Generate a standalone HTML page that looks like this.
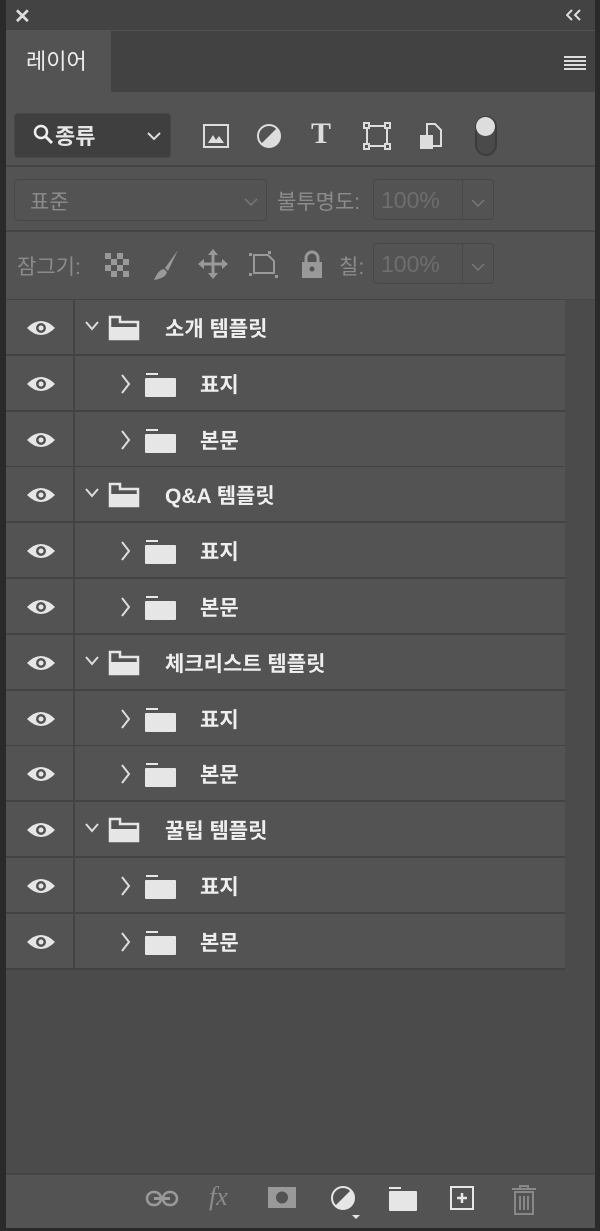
<!DOCTYPE html>
<html><head><meta charset="utf-8"><style>
*{margin:0;padding:0;box-sizing:border-box}
body{width:600px;height:1231px;background:#2a2a2a;position:relative;overflow:hidden;font-family:"Liberation Sans","Noto Sans CJK KR",sans-serif;color:#e6e6e6}
.a{position:absolute}
.panel{left:6px;top:0;width:589px;height:1228px;background:#535353}
.top{left:6px;top:0;width:589px;height:30px;background:#434343}
.tabbar{left:6px;top:31px;width:589px;height:61px;background:#424242}
.tab{left:6px;top:31px;width:105px;height:62px;background:#535353;font-size:22px;padding:13px 0 0 20px;color:#eee}
.sep{left:6px;width:589px;height:2px;background:#444}
.dim{color:#8c8c8c}
.box{border:1px solid #474747;border-radius:4px}
.list{left:6px;top:300px;width:559px;height:670px}
.row{position:absolute;left:0;width:559px;height:56px;background:#535353;border-bottom:2px solid #424242}
.eye{position:absolute;left:20px;top:18px}
.vl{position:absolute;left:67px;top:0;width:2px;height:56px;background:#444}
.t{position:absolute;top:13px;font-size:21px;font-weight:bold;color:#eee}
.below{left:6px;top:970px;width:589px;height:203px;background:#4b4b4b}
.scroll{left:565px;top:300px;width:30px;height:873px;background:#4b4b4b}
.bot{left:6px;top:1173px;width:589px;height:55px;background:#535353;border-top:2px solid #444}
.pct{font-size:23px;color:#6e6e6e}
</style></head><body>
<div class="a panel"></div>
<div class="a top"></div>
<div class="a" style="left:14px;top:4px;font-size:20px;font-weight:bold;color:#ddd">✕</div>
<svg class="a" style="left:566px;top:9px" width="16" height="12"><path d="M6 1 L1 6 L6 11 M14 1 L9 6 L14 11" stroke="#ddd" stroke-width="2" fill="none"/></svg>
<div class="a tabbar"></div>
<div class="a tab">레이어</div>
<svg class="a" style="left:563px;top:55px" width="24" height="15"><g stroke="#ddd" stroke-width="2"><line x1="1" y1="2" x2="23" y2="2"/><line x1="1" y1="6" x2="23" y2="6"/><line x1="1" y1="10" x2="23" y2="10"/><line x1="1" y1="14" x2="23" y2="14"/></g></svg>

<div class="a box" style="left:14px;top:113px;width:157px;height:45px;background:#3f3f3f"></div>
<svg class="a" style="left:33px;top:124px" width="22" height="22"><circle cx="8" cy="8" r="6" stroke="#eee" stroke-width="2.5" fill="none"/><line x1="12" y1="12" x2="19" y2="19" stroke="#eee" stroke-width="3"/></svg>
<div class="a" style="left:55px;top:119px;font-size:22px;font-weight:bold">종류</div>
<svg class="a" style="left:147px;top:131px" width="14" height="10"><path d="M1 2 L7 8 L13 2" stroke="#ddd" stroke-width="2" fill="none"/></svg>
<svg class="a" style="left:202px;top:123px" width="28" height="26"><rect x="2" y="2" width="24" height="22" stroke="#ddd" stroke-width="2" fill="none"/><path d="M6 20 L11 12 L14 17 L17 13 L22 20Z" fill="#ddd"/></svg>
<svg class="a" style="left:256px;top:123px" width="26" height="26"><circle cx="13" cy="13" r="11" stroke="#ddd" stroke-width="2" fill="none"/><path d="M21 5 A11 11 0 0 1 5 21Z" fill="#ddd"/></svg>
<div class="a" style="left:311px;top:117px;font-size:30px;font-weight:bold;font-family:'Liberation Serif',serif;color:#ddd">T</div>
<svg class="a" style="left:363px;top:122px" width="28" height="28"><rect x="4" y="4" width="20" height="20" stroke="#ddd" stroke-width="2" fill="none"/><g fill="#535353" stroke="#ddd" stroke-width="2"><rect x="1" y="1" width="5" height="5"/><rect x="22" y="1" width="5" height="5"/><rect x="1" y="22" width="5" height="5"/><rect x="22" y="22" width="5" height="5"/></g></svg>
<svg class="a" style="left:419px;top:122px" width="24" height="30"><path d="M8 2 H16 L22 8 V24 H8Z" stroke="#ddd" stroke-width="2" fill="none"/><rect x="1" y="13" width="13" height="14" fill="#ddd"/></svg>
<div class="a" style="left:475px;top:116px;width:22px;height:40px;border:2px solid #3c3c3c;border-radius:11px;background:#4a4a4a"></div>
<div class="a" style="left:476px;top:117px;width:19px;height:19px;border-radius:50%;background:#ddd"></div>
<div class="a sep" style="top:165px"></div>

<div class="a box" style="left:14px;top:179px;width:253px;height:42px"></div>
<div class="a dim" style="left:30px;top:186px;font-size:21px">표준</div>
<svg class="a" style="left:244px;top:197px" width="14" height="10"><path d="M1 2 L7 8 L13 2" stroke="#777" stroke-width="1.5" fill="none"/></svg>
<div class="a dim" style="left:277px;top:186px;font-size:21px">불투명도:</div>
<div class="a box" style="left:373px;top:179px;width:121px;height:41px"></div>
<div class="a" style="left:462px;top:180px;width:1px;height:39px;background:#474747"></div>
<div class="a pct" style="left:381px;top:187px">100%</div>
<svg class="a" style="left:471px;top:198px" width="14" height="10"><path d="M1 2 L7 8 L13 2" stroke="#777" stroke-width="1.5" fill="none"/></svg>
<div class="a sep" style="top:230px"></div>

<div class="a dim" style="left:17px;top:251px;font-size:21px">잠그기:</div>
<svg class="a" style="left:104px;top:252px" width="26" height="26"><rect x="1" y="1" width="24" height="24" fill="#999"/><g fill="#535353"><rect x="7" y="1" width="6" height="6"/><rect x="19" y="1" width="6" height="6"/><rect x="1" y="7" width="6" height="6"/><rect x="13" y="7" width="6" height="6"/><rect x="7" y="13" width="6" height="6"/><rect x="19" y="13" width="6" height="6"/><rect x="1" y="19" width="6" height="6"/><rect x="13" y="19" width="6" height="6"/></g></svg>
<svg class="a" style="left:152px;top:248px" width="30" height="34"><path d="M26 2 L13 20 L16 23 Z" fill="#999"/><path d="M12 21 C6 22 4 28 2 32 C8 31 14 29 15 24Z" fill="#999"/></svg>
<svg class="a" style="left:198px;top:249px" width="30" height="30"><g stroke="#999" stroke-width="3"><line x1="15" y1="3" x2="15" y2="27"/><line x1="3" y1="15" x2="27" y2="15"/></g><g fill="#999"><path d="M15 0 L20 6 H10Z"/><path d="M15 30 L20 24 H10Z"/><path d="M0 15 L6 10 V20Z"/><path d="M30 15 L24 10 V20Z"/></g></svg>
<svg class="a" style="left:248px;top:250px" width="32" height="28"><g stroke="#999" stroke-width="2" fill="none"><path d="M6 5 H20 L26 11 V23 H6Z"/></g><g fill="#999"><rect x="1" y="3" width="3" height="3"/><rect x="1" y="23" width="3" height="3"/><rect x="27" y="25" width="3" height="3"/><rect x="20" y="1" width="3" height="3"/></g></svg>
<svg class="a" style="left:300px;top:249px" width="24" height="30"><path d="M6 13 V9 A6 6 0 0 1 18 9 V13" stroke="#999" stroke-width="3" fill="none"/><rect x="2" y="13" width="20" height="16" fill="#999"/><circle cx="12" cy="20" r="2.5" fill="#535353"/></svg>
<div class="a dim" style="left:339px;top:251px;font-size:21px">칠:</div>
<div class="a box" style="left:373px;top:243px;width:121px;height:41px"></div>
<div class="a" style="left:462px;top:244px;width:1px;height:39px;background:#474747"></div>
<div class="a pct" style="left:381px;top:251px">100%</div>
<svg class="a" style="left:471px;top:262px" width="14" height="10"><path d="M1 2 L7 8 L13 2" stroke="#777" stroke-width="1.5" fill="none"/></svg>
<div class="a sep" style="top:299px"></div>

<div class="a scroll"></div>
<div class="a below"></div>
<div class="a list" id="list"></div>
<script>
var L=document.getElementById('list');
var eye='<svg class="eye" width="30" height="20"><path d="M1 10 Q15 -4 29 10 Q15 24 1 10Z" fill="#e6e6e6"/><circle cx="15" cy="10" r="5" fill="#535353"/><circle cx="15" cy="10" r="2.5" fill="#e6e6e6"/></svg><div class="vl"></div>';
var g=function(t){return eye+'<svg style="position:absolute;left:102px;top:15px" width="32" height="26"><path d="M2 2 H12 V7 H30 V24 H2Z" stroke="#e6e6e6" stroke-width="2.5" fill="none"/><rect x="2" y="12" width="28" height="12" fill="#e6e6e6"/></svg><svg style="position:absolute;left:78px;top:20px" width="16" height="12"><path d="M2 2 L8 9 L14 2" stroke="#ddd" stroke-width="2" fill="none"/></svg><div class="t" style="left:159px">'+t+'</div>'};
var c=function(t){return eye+'<svg style="position:absolute;left:114px;top:17px" width="12" height="22"><path d="M2 2 L9 11 L2 20" stroke="#ddd" stroke-width="2" fill="none"/></svg><svg style="position:absolute;left:138px;top:16px" width="34" height="26"><rect x="2" y="1" width="12" height="2" fill="#e6e6e6"/><rect x="1" y="6" width="31" height="19" rx="1" fill="#e6e6e6"/></svg><div class="t" style="left:194px">'+t+'</div>'};
var items=[['g','소개 템플릿'],['c','표지'],['c','본문'],['g','Q&amp;A 템플릿'],['c','표지'],['c','본문'],['g','체크리스트 템플릿'],['c','표지'],['c','본문'],['g','꿀팁 템플릿'],['c','표지'],['c','본문']];
var h='';items.forEach(function(it,i){h+='<div class="row" style="top:'+Math.round(i*55.8)+'px">'+(it[0]=='g'?g(it[1]):c(it[1]))+'</div>'});L.innerHTML=h;
</script>

<div class="a bot"></div>
<svg class="a" style="left:145px;top:1188px" width="34" height="22"><rect x="2" y="4" width="14" height="13" rx="6.5" stroke="#999" stroke-width="2.5" fill="none"/><rect x="18" y="4" width="14" height="13" rx="6.5" stroke="#999" stroke-width="2.5" fill="none"/><line x1="9" y1="10.5" x2="25" y2="10.5" stroke="#999" stroke-width="3"/></svg>
<div class="a" style="left:209px;top:1182px;font-size:26px;font-style:italic;color:#8c8c8c;font-family:'Liberation Serif',serif">fx</div>
<svg class="a" style="left:267px;top:1186px" width="30" height="24"><rect x="1" y="1" width="28" height="21" fill="#999"/><circle cx="15" cy="11.5" r="6" fill="#535353"/></svg>
<svg class="a" style="left:330px;top:1185px" width="30" height="36"><circle cx="13" cy="13" r="11" stroke="#e6e6e6" stroke-width="2" fill="none"/><path d="M21 5 A11 11 0 0 1 5 21Z" fill="#e6e6e6"/><path d="M22 30 H30 L26 34Z" fill="#e6e6e6"/></svg>
<svg class="a" style="left:388px;top:1186px" width="30" height="26"><rect x="1" y="1" width="12" height="2" fill="#e6e6e6"/><rect x="1" y="5" width="28" height="20" rx="1" fill="#e6e6e6"/></svg>
<svg class="a" style="left:449px;top:1185px" width="28" height="28"><rect x="2" y="2" width="22" height="22" stroke="#e6e6e6" stroke-width="2" fill="none"/><path d="M13 8 V18 M8 13 H18" stroke="#e6e6e6" stroke-width="2.5"/></svg>
<svg class="a" style="left:511px;top:1184px" width="26" height="32"><path d="M1 5 H25 M9 5 V2 H17 V5" stroke="#888" stroke-width="2" fill="none"/><rect x="4" y="8" width="18" height="22" stroke="#888" stroke-width="2" fill="none"/><path d="M9 12 V26 M13 12 V26 M17 12 V26" stroke="#888" stroke-width="2"/></svg>
</body></html>
